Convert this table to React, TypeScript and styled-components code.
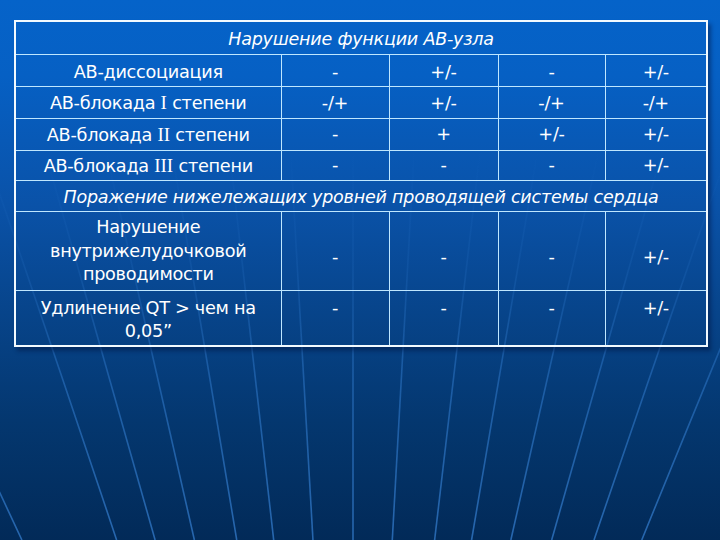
import React from 'react';
import styled, { createGlobalStyle } from 'styled-components';

const GlobalStyle = createGlobalStyle`
  html, body {
    margin: 0;
    padding: 0;
    background: #022a58;
  }
`;

const Slide = styled.div`
  position: relative;
  width: 720px;
  height: 540px;
  overflow: hidden;
  background: linear-gradient(
    180deg,
    #0563c9 0%,
    #0660c4 14%,
    #0a52a8 38%,
    #07448a 58%,
    #04376f 78%,
    #022a58 100%
  );
  font-family: 'DejaVu Sans', Verdana, sans-serif;
  color: #fff;
`;

const Backdrop = styled.svg`
  position: absolute;
  left: 0;
  top: 0;
  z-index: 0;
`;

const Content = styled.div`
  position: relative;
  z-index: 1;
  padding: 20px 14px 0;
`;

const Table = styled.table`
  width: 692px;
  border-collapse: collapse;
  table-layout: fixed;
  border: 2px solid #f2faff;
  box-shadow: 3px 4px 4px rgba(0, 18, 60, 0.45);
`;

const Row = styled.tr<{ $h: number }>`
  height: ${(p) => p.$h}px;
`;

const Heading = styled.td`
  text-align: center;
  font-style: italic;
  font-size: 17.5px;
  letter-spacing: -0.2px;
  padding: 2px 0 0;
  border: 1.5px solid #bfe7ff;
  white-space: nowrap;
`;

const Cell = styled.td<{ $align?: 'top' | 'middle'; $shift?: number }>`
  text-align: center;
  vertical-align: ${(p) => p.$align ?? 'middle'};
  font-size: 17.7px;
  line-height: 23.5px;
  letter-spacing: -0.3px;
  padding: ${(p) => p.$shift ?? 2}px 2px 0;
  border: 1.5px solid #bfe7ff;
`;

const Roman = styled.span`
  font-family: 'Liberation Serif', 'Times New Roman', serif;
  font-size: 19px;
  letter-spacing: 0;
`;

type Line = { top: number; mid: number; bottom: number };

// meridians at y = 150 / 330 / 540
const cx = 353;
const offsets = [-430, -307, -257, -206, -151, -103, -52, 0, 51, 106, 154, 205, 258, 313, 375];
const lines: Line[] = offsets.map((d) => ({
  top: cx + d * 1.2,
  mid: cx + d,
  bottom: cx + d * 0.77,
}));

const Meridians: React.FC = () => (
  <Backdrop width="720" height="540" viewBox="0 0 720 540">
    <defs>
      <linearGradient id="fade" x1="0" y1="150" x2="0" y2="540" gradientUnits="userSpaceOnUse">
        <stop offset="0" stopColor="#3f8fe8" stopOpacity="0" />
        <stop offset="0.3" stopColor="#3f8fe8" stopOpacity="0.12" />
        <stop offset="0.6" stopColor="#3f8fe8" stopOpacity="0.4" />
        <stop offset="1" stopColor="#3f8fe8" stopOpacity="0.6" />
      </linearGradient>
    </defs>
    {lines.map((l, i) => {
      // quadratic control point so the curve passes through mid at y=330
      const t = (330 - 150) / (540 - 150);
      const ctrlX = (l.mid - (1 - t) * (1 - t) * l.top - t * t * l.bottom) / (2 * t * (1 - t));
      const ctrlY = (330 - (1 - t) * (1 - t) * 150 - t * t * 540) / (2 * t * (1 - t));
      return (
        <path
          key={i}
          d={`M${l.top} 150 Q${ctrlX} ${ctrlY} ${l.bottom} 540`}
          fill="none"
          stroke="url(#fade)"
          strokeWidth="1.6"
        />
      );
    })}
  </Backdrop>
);

type Values = [string, string, string, string];

const avRows: { label: React.ReactNode; values: Values; h: number; shift?: number }[] = [
  { label: 'АВ-диссоциация', values: ['-', '+/-', '-', '+/-'], h: 32, shift: 6 },
  {
    label: (
      <>
        АВ-блокада <Roman>I</Roman> степени
      </>
    ),
    values: ['-/+', '+/-', '-/+', '-/+'],
    h: 32,
    shift: 3,
  },
  {
    label: (
      <>
        АВ-блокада <Roman>II</Roman> степени
      </>
    ),
    values: ['-', '+', '+/-', '+/-'],
    h: 32,
    shift: 2,
  },
  {
    label: (
      <>
        АВ-блокада <Roman>III</Roman> степени
      </>
    ),
    values: ['-', '-', '-', '+/-'],
    h: 30,
    shift: 2,
  },
];

export default function App() {
  return (
    <Slide>
      <GlobalStyle />
      <Meridians />
      <Content>
        <Table>
          <colgroup>
            <col style={{ width: 266 }} />
            <col style={{ width: 108 }} />
            <col style={{ width: 109 }} />
            <col style={{ width: 107 }} />
            <col style={{ width: 102 }} />
          </colgroup>
          <tbody>
            <Row $h={33}>
              <Heading colSpan={5}>Нарушение функции АВ-узла</Heading>
            </Row>
            {avRows.map((r, i) => (
              <Row key={i} $h={r.h}>
                <Cell $shift={r.shift}>{r.label}</Cell>
                {r.values.map((v, j) => (
                  <Cell key={j} $shift={r.shift}>
                    {v}
                  </Cell>
                ))}
              </Row>
            ))}
            <Row $h={31}>
              <Heading colSpan={5}>Поражение нижележащих уровней проводящей системы сердца</Heading>
            </Row>
            <Row $h={79}>
              <Cell $shift={2}>
                Нарушение
                <br />
                внутрижелудочковой
                <br />
                проводимости
              </Cell>
              {['-', '-', '-', '+/-'].map((v, j) => (
                <Cell key={j} $shift={14}>
                  {v}
                </Cell>
              ))}
            </Row>
            <Row $h={56}>
              <Cell $align="top" $shift={6}>
                Удлинение QT &gt; чем на
                <br />
                0,05”
              </Cell>
              {['-', '-', '-', '+/-'].map((v, j) => (
                <Cell key={j} $align="top" $shift={6}>
                  {v}
                </Cell>
              ))}
            </Row>
          </tbody>
        </Table>
      </Content>
    </Slide>
  );
}
